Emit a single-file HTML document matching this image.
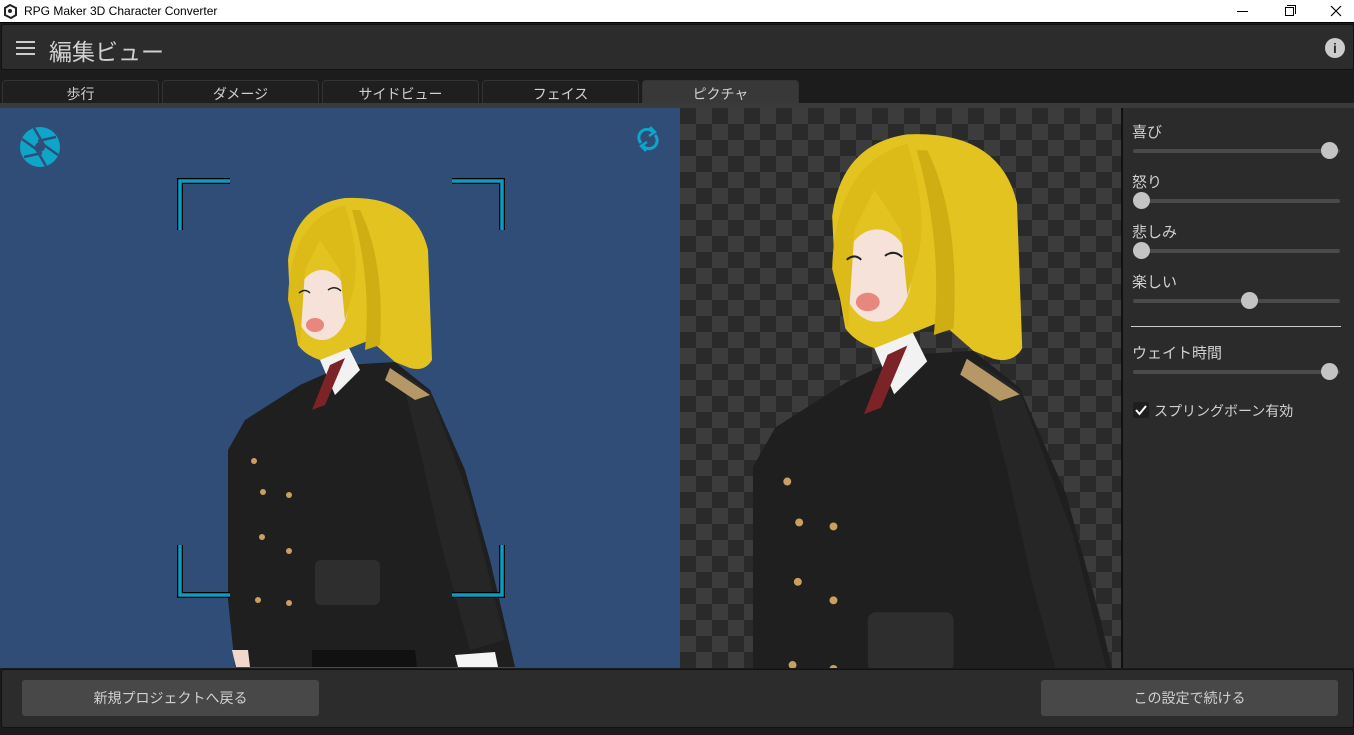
<!DOCTYPE html>
<html><head><meta charset="utf-8"><style>
*{margin:0;padding:0;box-sizing:border-box}
body{width:1354px;height:735px;overflow:hidden;background:#1c1c1c;font-family:"Liberation Sans","Noto Sans CJK JP",sans-serif;position:relative}
.abs{position:absolute}
#title{left:0;top:0;width:1354px;height:23px;background:#fff;border-bottom:1px solid #000}
#title span{position:absolute;left:24px;top:4px;font-size:12px;color:#000}
#hdr{left:1px;top:24px;width:1353px;height:46px;background:#2c2c2c;border:1px solid #111;border-radius:3px}
#hdr .t{position:absolute;left:47px;top:8px;font-size:23px;color:#d0d0d0}
.tab{top:80px;height:24px;width:157px;background:#1f1f1f;border:1px solid #333;border-bottom:none;border-radius:4px 4px 0 0;color:#cfcfcf;font-size:14px;text-align:center;line-height:26px}
#strip{left:0;top:103px;width:1354px;height:5px;background:#3a3a3a}
#blue{left:0;top:108px;width:680px;height:560px;background:#304d78;overflow:hidden}
#chk{left:680px;top:108px;width:441px;height:560px;overflow:hidden;background-color:#2a2a2a;background-image:linear-gradient(45deg,#3c3c3c 25%,transparent 25%,transparent 75%,#3c3c3c 75%),linear-gradient(45deg,#3c3c3c 25%,transparent 25%,transparent 75%,#3c3c3c 75%);background-size:32px 32px;background-position:0 0,16px 16px}
#panel{left:1121px;top:108px;width:233px;height:560px;background:#2b2b2b;border-left:2px solid #111}
.lbl{position:absolute;left:9px;font-size:15px;color:#d0d0d0}
.tr{position:absolute;left:10px;width:207px;height:4px;background:#4a4a4a;border-radius:2px}
.kn{position:absolute;width:17px;height:17px;border-radius:50%;background:#c4c4c4}
#bot{left:1px;top:669px;width:1353px;height:59px;background:#2c2c2c;border:1px solid #111;border-radius:3px}
.btn{position:absolute;top:680px;height:36px;width:297px;background:#484848;border-radius:3px;color:#d0d0d0;font-size:14px;text-align:center;line-height:36px}
</style></head><body>
<div id="title" class="abs">
<svg class="abs" style="left:3px;top:4px" width="15" height="15" viewBox="0 0 15 15"><path d="M7 1 L13 4 L13 11 L8 14 L2 11 L2 4 Z" fill="none" stroke="#222" stroke-width="2"/><circle cx="7" cy="7" r="2" fill="#222"/></svg>
<span>RPG Maker 3D Character Converter</span>
<div class="abs" style="left:1237px;top:11px;width:11px;height:1px;background:#000"></div>
<div class="abs" style="left:1285px;top:7px;width:9px;height:9px;border:1px solid #000"></div>
<div class="abs" style="left:1287px;top:5px;width:9px;height:9px;border-top:1px solid #000;border-right:1px solid #000"></div>
<svg class="abs" style="left:1330px;top:5px" width="12" height="12"><path d="M1 1L11 11M11 1L1 11" stroke="#000" stroke-width="1.2"/></svg>
</div>
<div id="hdr" class="abs">
<svg class="abs" style="left:14px;top:15px" width="20" height="16"><rect y="1" width="19" height="2" fill="#ccc"/><rect y="7" width="19" height="2" fill="#ccc"/><rect y="13" width="19" height="2" fill="#ccc"/></svg>
<div class="t">編集ビュー</div>
<div class="abs" style="left:1323px;top:13px;width:20px;height:20px;border-radius:50%;background:#ccc;color:#2c2c2c;font-weight:bold;font-size:14px;text-align:center;line-height:20px">i</div>
</div>
<div class="tab abs" style="left:2px">歩行</div>
<div class="tab abs" style="left:162px">ダメージ</div>
<div class="tab abs" style="left:322px">サイドビュー</div>
<div class="tab abs" style="left:482px">フェイス</div>
<div class="tab abs" style="left:642px;background:#383838">ピクチャ</div>
<div id="strip" class="abs"></div>

<svg width="0" height="0" style="position:absolute"><defs>
<g id="ch">
<path d="M300 385 L345 365 L395 362 L430 390 L465 470 L490 560 L515 667 L235 667 L228 600 L228 450 L245 420 Z" fill="#1f1f1f"/>
<path d="M400 372 L430 392 L470 500 L505 640 L470 650 L440 540 L420 450 Z" fill="#262626"/>
<path d="M390 368 L430 395 L415 400 L385 380Z" fill="#b59866"/>
<path d="M312 650 L415 650 L417 667 L312 667Z" fill="#111"/>
<rect x="315" y="560" width="65" height="45" rx="6" fill="#2e2e2e"/>
<path d="M320 360 L345 340 L360 370 L335 395 Z" fill="#f2f2f2"/>
<path d="M330 365 L345 358 L325 405 L312 410Z" fill="#7c2328"/>
<circle cx="254" cy="461" r="3" fill="#c9a060"/><circle cx="263" cy="492" r="3" fill="#c9a060"/><circle cx="289" cy="495" r="3" fill="#c9a060"/><circle cx="262" cy="537" r="3" fill="#c9a060"/><circle cx="289" cy="551" r="3" fill="#c9a060"/><circle cx="258" cy="600" r="3" fill="#c9a060"/><circle cx="289" cy="603" r="3" fill="#c9a060"/>
<path d="M288 260 Q295 205 345 198 Q415 195 428 250 L432 360 Q425 372 410 368 L395 362 L370 340 L345 350 L320 360 Q305 355 298 345 L290 300 Z" fill="#e3c320"/>
<ellipse cx="322" cy="305" rx="26" ry="35" fill="#f6e2d8"/>
<path d="M288 300 Q290 220 345 205 Q362 260 352 295 L345 320 L340 270 L320 240 L305 270 L300 345 Z" fill="#dcba18"/>
<path d="M352 210 Q372 280 365 350 L380 345 Q385 260 360 210Z" fill="#cfae14"/>
<ellipse cx="315" cy="325" rx="9" ry="7" fill="#e8877e"/>
<path d="M299 293 Q305 288 310 293 M328 290 Q335 285 341 291" stroke="#222" stroke-width="1.5" fill="none"/>
<path d="M232 650 L248 650 L250 667 L236 667Z" fill="#f1d8cc"/>
<path d="M455 655 L495 652 L498 667 L458 667Z" fill="#f5f5f5"/>
</g></defs></svg>

<div id="blue" class="abs">
<svg width="680" height="560" viewBox="0 108 680 560" style="position:absolute;left:0;top:0"><use href="#ch"/>
<g fill="none" stroke="#000" stroke-width="6"><path d="M180 230 V181 H230 M452 181 H502 V230 M180 545 V595 H230 M452 595 H502 V545"/></g>
<g fill="none" stroke="#0b9cc0" stroke-width="3.5"><path d="M180 230 V181 H230 M452 181 H502 V230 M180 545 V595 H230 M452 595 H502 V545"/></g>
<g transform="translate(40,147)"><circle r="20" fill="#0ea5c8"/><g stroke="#304d78" stroke-width="2.5"><path d="M-6 -19 L4 -2 M16 -10 L-2 -6 M18 8 L4 -2 M6 19 L-4 2 M-16 10 L2 6 M-18 -8 L-4 2"/></g><circle r="5" fill="#304d78"/></g>
<g transform="translate(648,139)" fill="none" stroke="#0ea5c8" stroke-width="3"><path d="M-7 4 A8 8 0 0 1 5 -7"/><path d="M7 -4 A8 8 0 0 1 -5 7"/><path d="M2 -12 L7 -7 L1 -3" stroke-width="2.5"/><path d="M-2 12 L-7 7 L-1 3" stroke-width="2.5"/></g>
</svg></div>
<div id="chk" class="abs">
<svg width="441" height="560" viewBox="680 108 441 560" style="position:absolute;left:0;top:0"><g transform="translate(452,-127) scale(1.32)"><use href="#ch"/></g></svg>
</div>
<div id="panel" class="abs">
<div class="lbl" style="top:13px">喜び</div><div class="tr" style="top:41px"></div><div class="kn" style="left:198px;top:34px"></div>
<div class="lbl" style="top:63px">怒り</div><div class="tr" style="top:91px"></div><div class="kn" style="left:10px;top:84px"></div>
<div class="lbl" style="top:113px">悲しみ</div><div class="tr" style="top:141px"></div><div class="kn" style="left:10px;top:134px"></div>
<div class="lbl" style="top:163px">楽しい</div><div class="tr" style="top:191px"></div><div class="kn" style="left:118px;top:184px"></div>
<div class="abs" style="left:8px;top:218px;width:210px;height:1px;background:#ccc"></div>
<div class="lbl" style="top:234px">ウェイト時間</div><div class="tr" style="top:262px"></div><div class="kn" style="left:198px;top:255px"></div>
<div class="abs" style="left:10px;top:294px;width:16px;height:16px;background:#1e1e1e;border-radius:2px"></div>
<svg class="abs" style="left:12px;top:296px" width="12" height="12"><path d="M1 6 L4.5 10 L11 2" stroke="#fff" stroke-width="2" fill="none"/></svg>
<div class="lbl" style="top:293px;left:31px;font-size:14px">スプリングボーン有効</div>
</div>
<div id="bot" class="abs"></div>
<div class="btn" style="left:22px">新規プロジェクトへ戻る</div>
<div class="btn" style="left:1041px">この設定で続ける</div>
</body></html>
